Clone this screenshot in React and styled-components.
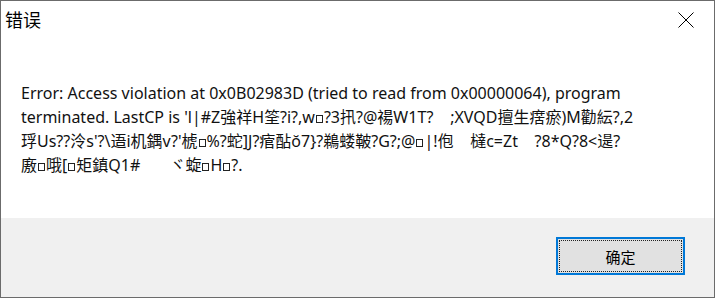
import React from "react";
import styled, { createGlobalStyle } from "styled-components";

const Global = createGlobalStyle`
  html, body { margin: 0; padding: 0; background: #ffffff; }
  #root { width: 715px; height: 298px; }
`;

const Window = styled.div`
  box-sizing: border-box;
  width: 715px;
  height: 298px;
  border: 1px solid #6b6b6b;
  display: flex;
  flex-direction: column;
  background: #ffffff;
  font-family: "Noto Sans", "Noto Sans CJK SC", sans-serif;
  color: #000;
`;

const TitleBar = styled.div`
  height: 38px;
  display: flex;
  align-items: center;
  justify-content: space-between;
  padding-left: 4px;
`;

const Title = styled.span`
  font-family: "Noto Sans CJK SC", sans-serif;
  font-size: 18px;
  line-height: 20px;
  margin-top: -2px;
`;

const CloseButton = styled.div`
  width: 46px;
  height: 38px;
  display: flex;
  align-items: center;
  justify-content: center;
  margin-right: 5px;
`;

const Body = styled.div`
  flex: 1;
  padding: 42px 0 0 20px;
  font-size: 16px;
  line-height: 24px;
  color: #111;
`;

const Line = styled.div`
  white-space: pre;
`;

const Missing = styled.span`
  display: inline-block;
  box-sizing: border-box;
  width: 7px;
  height: 8px;
  border: 1px solid #222;
  margin: 0 1px;
  vertical-align: 0px;
`;

const Footer = styled.div`
  height: 79px;
  background: #f0f0f0;
  display: flex;
  align-items: flex-start;
  justify-content: flex-end;
  padding: 19px 29px 0 0;
  box-sizing: border-box;
`;

const Button = styled.button`
  box-sizing: border-box;
  width: 129px;
  height: 38px;
  border: 2px solid #0078d7;
  background: #e1e1e1;
  padding: 1px;
  display: flex;
  font-family: "Noto Sans CJK SC", sans-serif;
  font-size: 15px;
  color: #000;
`;

const FocusRect = styled.span`
  flex: 1;
  border: 1px dotted #222;
  display: flex;
  align-items: center;
  justify-content: center;
`;

const lines = [
  "Error: Access violation at 0x0B02983D (tried to read from 0x00000064), program",
  "terminated. LastCP is 'l|#Z強祥H筌?i?,w□?3扟?@禓W1T?    ;XVQD擅生瘔瘀)M勸紜?,2",
  "琈Us??泠s'?\\逜i机鍝v?'椃□%?蛇]J?痯酟ŏ7}?鵜蝼鞁?G?;@□|!佨    橽c=Zt    ?8*Q?8<遈?",
  "廒□哦[□矩鎮Q1#       ヾ蜁□H□?.",
];

function renderLine(text) {
  const parts = text.split("□");
  const out = [];
  parts.forEach((p, i) => {
    if (i > 0) out.push(<Missing key={"m" + i} />);
    out.push(<React.Fragment key={"t" + i}>{p}</React.Fragment>);
  });
  return out;
}

export default function App() {
  return (
    <>
      <Global />
      <Window>
        <TitleBar>
          <Title>错误</Title>
          <CloseButton>
            <svg width="16" height="16" viewBox="0 0 16 16">
              <path d="M0.5 0.5 L15.5 15.5 M15.5 0.5 L0.5 15.5" stroke="#000" strokeWidth="1" fill="none" />
            </svg>
          </CloseButton>
        </TitleBar>
        <Body>
          {lines.map((l, i) => (
            <Line key={i}>{renderLine(l)}</Line>
          ))}
        </Body>
        <Footer>
          <Button>
            <FocusRect>确定</FocusRect>
          </Button>
        </Footer>
      </Window>
    </>
  );
}
